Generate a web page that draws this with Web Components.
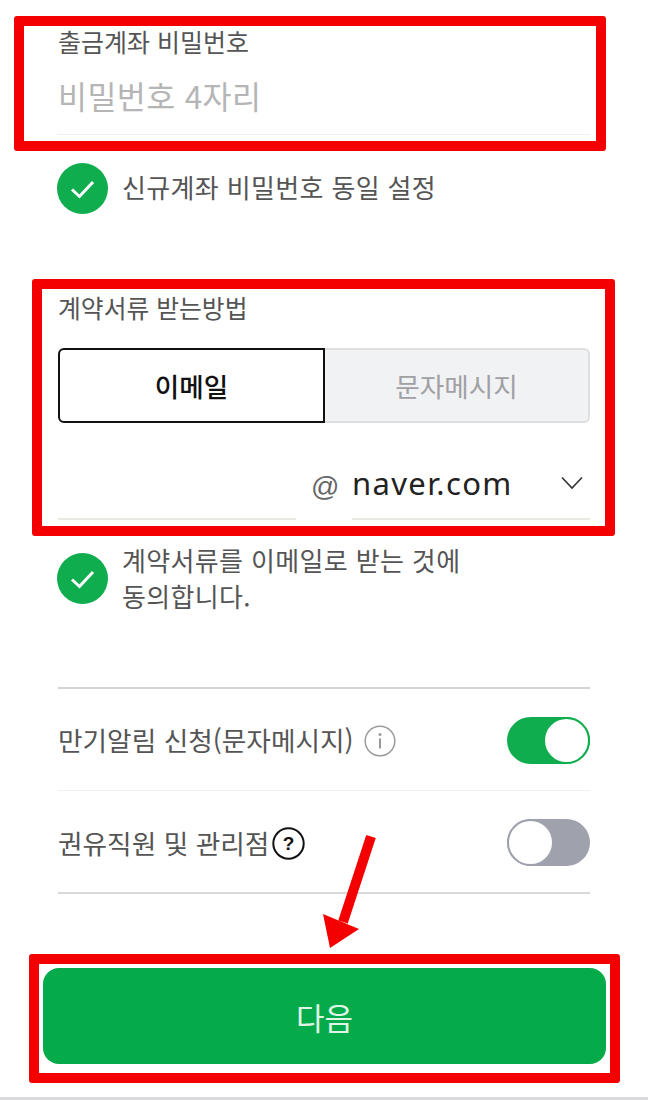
<!DOCTYPE html>
<html lang="ko">
<head>
<meta charset="utf-8">
<title>계좌 개설</title>
<style>
  html, body { margin: 0; padding: 0; background: #fff; }
  body {
    width: 648px; height: 1100px; overflow: hidden; position: relative;
    font-family: "Noto Sans CJK KR", "Noto Sans", sans-serif;
  }
</style>
</head>
<body>
<form-page>
  <pin-field label="출금계좌 비밀번호" placeholder="비밀번호 4자리"></pin-field>
  <check-row style="margin-top:28px">신규계좌 비밀번호 동일 설정</check-row>
  <contract-method style="margin-top:78px"></contract-method>
  <check-row style="margin-top:22px" multi>계약서류를 이메일로 받는 것에<br>동의합니다.</check-row>
  <switch-list style="margin-top:73px"></switch-list>
  <next-button style="margin-top:74px">다음</next-button>
</form-page>
<red-box x="14" y="16" w="592" h="135"></red-box>
<red-box x="32" y="279" w="583" h="257"></red-box>
<red-box x="29" y="954" w="591" h="129"></red-box>
<red-arrow></red-arrow>

<script>
const ink = '#555';

class FormPage extends HTMLElement {
  constructor() {
    super();
    this.attachShadow({ mode: 'open' }).innerHTML = `
      <style>
        :host{ display:block; height:1100px; box-sizing:border-box; position:relative; padding:26px 58px 0; }
        .bottom{ position:absolute; left:0; right:0; bottom:0; height:3px; background:#d9d9dc; }
      </style>
      <slot></slot><div class="bottom"></div>`;
  }
}

class PinField extends HTMLElement {
  constructor() {
    super();
    const label = this.getAttribute('label');
    const ph = this.getAttribute('placeholder');
    this.attachShadow({ mode: 'open' }).innerHTML = `
      <style>
        :host{ display:block; height:108px; border-bottom:1px solid #eeeff1; box-sizing:content-box; padding-left:1px; margin-left:-1px; }
        .label{ font-size:25px; line-height:30px; color:${ink}; }
        .ph{ font-size:31.5px; line-height:44px; margin-top:17px; color:#b5b5b5; letter-spacing:.4px; }
      </style>
      <div class="label">${label}</div>
      <div class="ph">${ph}</div>`;
  }
}

class CheckRow extends HTMLElement {
  constructor() {
    super();
    this.attachShadow({ mode: 'open' }).innerHTML = `
      <style>
        :host{ display:flex; align-items:center; gap:14px; margin-left:-1px; }
        svg{ flex:none; width:51px; height:51px; display:block; }
        .text{ font-size:26px; line-height:36px; color:${ink}; letter-spacing:.35px; }
        :host(:not([multi])) .text{ margin-bottom:3px; }
      </style>
      <svg viewBox="0 0 51 51"><circle cx="25.5" cy="25.5" r="25.5" fill="#0fad4e"/><path d="M15 26.5 L22.5 33.5 L36 19" fill="none" stroke="#fff" stroke-width="3"/></svg>
      <div class="text"><slot></slot></div>`;
  }
}

class ContractMethod extends HTMLElement {
  constructor() {
    super();
    this.attachShadow({ mode: 'open' }).innerHTML = `
      <style>
        :host{ display:block; }
        .label{ font-size:24.8px; line-height:30px; color:${ink}; }
        .seg{ display:flex; height:75px; margin-top:26px; }
        .seg div{ flex:1; display:flex; align-items:center; justify-content:center; box-sizing:border-box; font-size:26.6px; }
        .on{ border:2px solid #111; border-radius:6px 0 0 6px; color:#111; font-weight:500; background:#fff; flex:0 0 267px !important; }
        .off{ border:2px solid #dedfe1; border-left:0; border-radius:0 6px 6px 0; color:#a0a0a3; background:#f1f2f4; }
        .mail{ display:flex; height:97px; }
        .user{ width:238px; border-bottom:2px solid #e9e8e2; }
        .at{ width:56px; box-sizing:border-box; padding:47px 0 0 15px; font-size:28px; line-height:34px; color:#666; font-family:"Liberation Sans", sans-serif; }
        .domain{ flex:1; border-bottom:2px solid #e9e8e2; display:flex; align-items:flex-end; justify-content:space-between; padding-bottom:15px; }
        .domain span{ font-family:"Noto Sans", sans-serif; font-size:31px; line-height:40px; letter-spacing:1.35px; color:#222; }
        .domain svg{ width:22px; height:14px; margin:0 7px 13px 0; }
      </style>
      <div class="label">계약서류 받는방법</div>
      <div class="seg"><div class="on">이메일</div><div class="off">문자메시지</div></div>
      <div class="mail">
        <div class="user"></div>
        <div class="at">@</div>
        <div class="domain"><span>naver.com</span>
          <svg viewBox="0 0 22 14"><path d="M1 1.5 L11 12 L21 1.5" fill="none" stroke="#333" stroke-width="1.6"/></svg>
        </div>
      </div>`;
  }
}

class ToggleSwitch extends HTMLElement {
  constructor() {
    super();
    const on = this.hasAttribute('on');
    this.attachShadow({ mode: 'open' }).innerHTML = `
      <style>
        :host{ display:block; width:83px; height:47px; margin-top:2px; flex:none; position:relative; border-radius:24px; background:${on ? '#0fad4e' : '#9fa2ad'}; }
        .knob{ position:absolute; top:0; ${on ? 'right:0' : 'left:0'}; width:47px; height:47px; box-sizing:border-box; border-radius:50%; background:#fff; border:2px solid ${on ? '#0fad4e' : '#9fa2ad'}; }
      </style>
      <div class="knob"></div>`;
  }
}

class SwitchList extends HTMLElement {
  constructor() {
    super();
    this.attachShadow({ mode: 'open' }).innerHTML = `
      <style>
        :host{ display:block; border-top:2px solid #d4d4d6; border-bottom:2px solid #d9d9db; }
        .row{ display:flex; align-items:center; height:101px; }
        .row + .row{ border-top:1px solid #f0f0f2; }
        .t{ font-size:26.7px; color:${ink}; line-height:36px; }
        .grow{ flex:1; }
        svg{ display:block; flex:none; }
      </style>
      <div class="row">
        <span class="t">만기알림 신청(문자메시지)</span>
        <svg style="margin:3px 0 0 10px" width="32" height="32" viewBox="0 0 32 32"><circle cx="16" cy="16" r="14.8" fill="none" stroke="#999" stroke-width="1.5"/><circle cx="16" cy="9.6" r="1.5" fill="#999"/><path d="M16 13.5V23.5" stroke="#999" stroke-width="2"/></svg>
        <span class="grow"></span>
        <toggle-switch on></toggle-switch>
      </div>
      <div class="row">
        <span class="t" style="margin-top:2px">권유직원 및 관리점</span>
        <svg style="margin:4px 0 0 3px" width="33" height="33" viewBox="0 0 33 33"><circle cx="16.5" cy="16.5" r="15.2" fill="none" stroke="#111" stroke-width="2"/><text x="16.5" y="23" text-anchor="middle" font-size="19" font-weight="700" fill="#111" font-family="Liberation Sans, sans-serif">?</text></svg>
        <span class="grow"></span>
        <toggle-switch></toggle-switch>
      </div>`;
  }
}

class NextButton extends HTMLElement {
  constructor() {
    super();
    this.attachShadow({ mode: 'open' }).innerHTML = `
      <style>
        :host{ display:flex; align-items:center; justify-content:center; height:96px; margin:0 -16px 0 -15px; border-radius:16px; background:#05ab4b; color:#dff5e6; font-size:31px; }
      </style>
      <slot></slot>`;
  }
}

class RedBox extends HTMLElement {
  constructor() {
    super();
    const a = n => this.getAttribute(n) + 'px';
    this.attachShadow({ mode: 'open' }).innerHTML = `
      <style>
        :host{ display:block; position:absolute; left:${a('x')}; top:${a('y')}; width:${a('w')}; height:${a('h')}; box-sizing:border-box; border:10px solid #f40000; border-radius:3px; pointer-events:none; }
      </style>`;
  }
}

class RedArrow extends HTMLElement {
  constructor() {
    super();
    this.attachShadow({ mode: 'open' }).innerHTML = `
      <style>
        :host{ display:block; position:absolute; left:315px; top:830px; width:70px; height:122px; }
        svg{ display:block; }
      </style>
      <svg width="70" height="122" viewBox="0 0 70 122">
        <path d="M56 6.5 L28 92" stroke="#f40000" stroke-width="10" fill="none"/>
        <path d="M8 84 L44 99 L15 118 Z" fill="#f40000"/>
      </svg>`;
  }
}

customElements.define('form-page', FormPage);
customElements.define('pin-field', PinField);
customElements.define('check-row', CheckRow);
customElements.define('contract-method', ContractMethod);
customElements.define('toggle-switch', ToggleSwitch);
customElements.define('switch-list', SwitchList);
customElements.define('next-button', NextButton);
customElements.define('red-box', RedBox);
customElements.define('red-arrow', RedArrow);
</script>
</body>
</html>
